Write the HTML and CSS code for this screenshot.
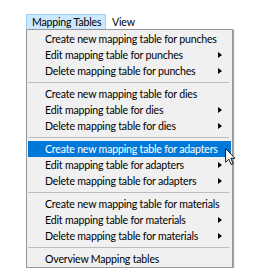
FILE: index.html
```html
<!DOCTYPE html>
<html>
<head>
    <title>Mapping Tables</title>
    <link rel="stylesheet" href="styles.css">
</head>
<body>
    <div class="app">
        <div class="menubar">
            <div class="menubar-item active">Mapping Tables</div>
            <div class="menubar-item">View</div>
        </div>
        <div class="dropdown">
            <div class="row">Create new mapping table for punches</div>
            <div class="row sub">Edit mapping table for punches</div>
            <div class="row sub">Delete mapping table for punches</div>
            <div class="sep"></div>
            <div class="row">Create new mapping table for dies</div>
            <div class="row sub">Edit mapping table for dies</div>
            <div class="row sub">Delete mapping table for dies</div>
            <div class="sep"></div>
            <div class="row hover">Create new mapping table for adapters</div>
            <div class="row sub">Edit mapping table for adapters</div>
            <div class="row sub">Delete mapping table for adapters</div>
            <div class="sep"></div>
            <div class="row">Create new mapping table for materials</div>
            <div class="row sub">Edit mapping table for materials</div>
            <div class="row sub">Delete mapping table for materials</div>
            <div class="sep"></div>
            <div class="row">Overview Mapping tables</div>

            <svg class="cursor" width="11" height="17" viewBox="0 0 12 19">
                <path d="M0.5 0.5 L0.5 16 L4 12.5 L6.8 18.5 L9 17.5 L6.3 11.5 L11 11.5 Z" fill="#fff" stroke="#000" stroke-width="1" stroke-linejoin="miter"/>
            </svg>
        </div>
    </div>
</body>
</html>
```

FILE: styles.css
```css
body {
    margin: 0;
    background: #fff;
    font-family: Lato, "Noto Sans", sans-serif;
    font-size: 10.6px;
    letter-spacing: -0.2px;
    color: #000;
}
.app {
    padding: 14px 0 0 26px;
}
.menubar {
    display: flex;
    height: 15px;
}
.menubar-item {
    display: flex;
    align-items: center;
    padding: 0 5px;
    border: 1px solid transparent;
    border-bottom: none;
    white-space: nowrap;
}
.menubar-item.active {
    background: #cce8ff;
    border-color: #99d1ff;
    width: 68px;
}
.dropdown {
    position: relative;
    width: 207px;
    box-sizing: border-box;
    background: #f0f0f0;
    border: 1px solid #979797;
    padding: 1px 1px 0 1px;
    box-shadow: 1px 1px 1px rgba(0, 0, 0, 0.35);
}
.row {
    height: 16px;
    display: flex;
    align-items: center;
    padding-left: 17px;
    white-space: nowrap;
    position: relative;
}
.row.hover {
    background: #0078d7;
    color: #fff;
}
.row.sub::after {
    content: "";
    position: absolute;
    right: 9px;
    top: 5px;
    border-left: 4px solid #000;
    border-top: 3.5px solid transparent;
    border-bottom: 3.5px solid transparent;
}
.sep {
    height: 1px;
    background: #bdbdbd;
    margin: 3px 2px 3px 0;
}
.cursor {
    position: absolute;
    left: 198px;
    top: 118px;
}
```
